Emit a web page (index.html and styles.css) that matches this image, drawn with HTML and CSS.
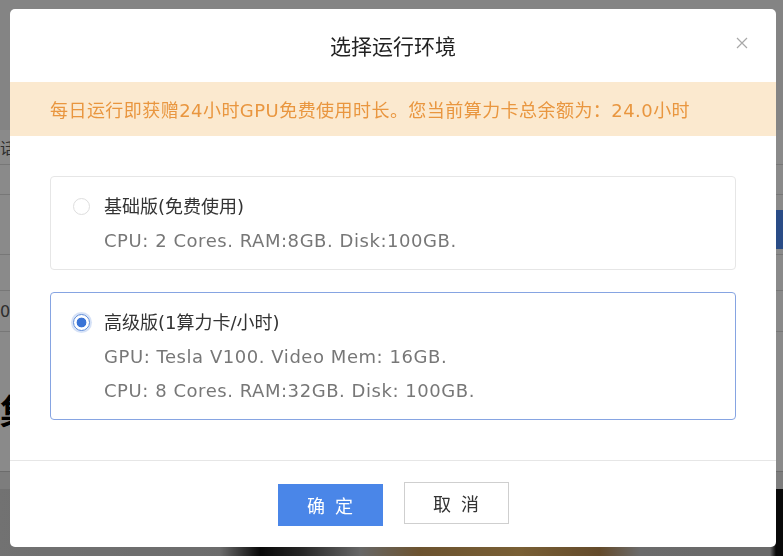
FILE: index.html
```html
<!DOCTYPE html>
<html lang="zh-CN">
<head>
<meta charset="utf-8">
<title>选择运行环境</title>
<link rel="stylesheet" href="styles.css">
</head>
<body>
<div class="page">
  <div class="pg-head"></div>
  <div class="pg-row pg-r1"><span class="pg-text">话题</span></div>
  <div class="pg-row pg-r2"></div>
  <div class="pg-row pg-r3"><span></span><span class="pg-btn"></span></div>
  <div class="pg-row pg-r4"></div>
  <div class="pg-row pg-r5"><span class="pg-text">06</span></div>
  <div class="pg-row pg-r6"><span class="pg-big">集</span></div>
  <div class="pg-strip"></div>
  <div class="pg-image"></div>
</div>
<div class="overlay"></div>
<div class="modal">
  <div class="modal-header">
    <span></span>
    <h2 class="modal-title">选择运行环境</h2>
    <button class="modal-close" aria-label="关闭">
      <svg width="12" height="12" viewBox="0 0 12 12"><path d="M1 1L11 11M11 1L1 11" stroke="#a8a8a8" stroke-width="1.2" fill="none"/></svg>
    </button>
  </div>
  <div class="banner">每日运行即获赠24小时GPU免费使用时长。您当前算力卡总余额为：24.0小时</div>
  <div class="modal-body">
    <label class="card">
      <span class="radio"></span>
      <div class="card-lines">
        <div class="card-title">基础版(免费使用)</div>
        <div class="card-spec">CPU: 2 Cores. RAM:8GB. Disk:100GB.</div>
      </div>
    </label>
    <label class="card card-active">
      <span class="radio radio-on"></span>
      <div class="card-lines">
        <div class="card-title">高级版(1算力卡/小时)</div>
        <div class="card-spec">GPU: Tesla V100. Video Mem: 16GB.</div>
        <div class="card-spec">CPU: 8 Cores. RAM:32GB. Disk: 100GB.</div>
      </div>
    </label>
  </div>
  <div class="modal-footer">
    <button class="btn btn-primary">确定</button>
    <button class="btn btn-default">取消</button>
  </div>
</div>
</body>
</html>
```

FILE: styles.css
```css
* { box-sizing: border-box; }
html, body { margin: 0; padding: 0; }
body {
  width: 783px;
  height: 556px;
  overflow: hidden;
  font-family: "DejaVu Sans", "Noto Sans CJK SC", sans-serif;
}

/* background page */
.page {
  height: 556px;
  display: flex;
  flex-direction: column;
  background: #ffffff;
}
.pg-head { height: 130px; background: #f4f4f4; }
.pg-row {
  display: flex;
  justify-content: space-between;
  align-items: center;
  border-bottom: 1px solid #dcdcdc;
  font-size: 16px;
  color: #555;
}
.pg-r1 { height: 35px; }
.pg-r2 { height: 30px; }
.pg-r3 { height: 60px; align-items: flex-end; }
.pg-r4 { height: 36px; }
.pg-r5 { height: 41px; }
.pg-r6 { height: 140px; border-bottom-color: #c8c8c8; }
.pg-text { margin-left: 0; }
.pg-btn {
  width: 8px;
  height: 39px;
  margin-bottom: 5px;
  background: #4f8cf7;
}
.pg-big {
  font-size: 34px;
  font-weight: 700;
  color: #000;
  margin-top: 16px;
}
.pg-strip { height: 17px; background: #e8e8e8; }
.pg-image {
  flex: 1;
  background: linear-gradient(90deg, #d2d2d2 0px, #c8c8c8 220px, #111 260px, #444 300px, #bdbdbd 360px, #c89a58 420px, #e0b062 520px, #b88a50 600px, #c6c6c6 640px, #c4c4c4 770px, #111 776px);
}

.overlay {
  position: fixed;
  inset: 0;
  background: rgba(0, 0, 0, 0.46);
}

/* modal */
.modal {
  position: fixed;
  top: 9px;
  left: 10px;
  width: 766px;
  height: 538px;
  background: #fff;
  border-radius: 5px;
  display: flex;
  flex-direction: column;
  overflow: hidden;
}
.modal-header {
  height: 73px;
  display: grid;
  grid-template-columns: 1fr auto 1fr;
  align-items: center;
}
.modal-title {
  margin: 0;
  font-family: "Noto Sans CJK SC", sans-serif;
  font-size: 21px;
  font-weight: 400;
  color: #222;
  padding-bottom: 1px;
}
.modal-close {
  justify-self: end;
  margin-right: 28px;
  margin-bottom: 6px;
  border: 0;
  background: none;
  padding: 0;
  width: 12px;
  height: 12px;
  display: flex;
}
.banner {
  height: 54px;
  display: flex;
  align-items: center;
  padding-left: 40px;
  background: #fbe9cf;
  color: #e9963f;
  font-size: 18px;
  letter-spacing: 0.45px;
}
.modal-body {
  padding: 40px 40px 40px;
  display: flex;
  flex-direction: column;
  gap: 22px;
  border-bottom: 1px solid #e6e6e6;
}
.card {
  display: grid;
  grid-template-columns: 16px 1fr;
  column-gap: 15px;
  align-items: start;
  padding: 13px 20px 11px 22px;
  border: 1px solid #e6e6e6;
  border-radius: 4px;
}
.card-active { border-color: #86a4e2; }
.radio {
  width: 17px;
  height: 17px;
  margin-top: 8px;
  border: 1px solid #dedede;
  border-radius: 50%;
  background: #fff;
}
.radio-on {
  border: 1.5px solid #5c8ad8;
  background: radial-gradient(circle, #3a74d6 0 4.6px, #fff 5.2px);
  box-shadow: 0 0 0 2px rgba(120, 160, 230, 0.3);
}
.card-lines { display: flex; flex-direction: column; }
.card-title {
  line-height: 34px;
  font-size: 18px;
  color: #333;
}
.card-spec {
  line-height: 34px;
  font-size: 18px;
  letter-spacing: 0.55px;
  color: #777;
}
.modal-footer {
  flex: 1;
  display: flex;
  justify-content: center;
  align-items: center;
  gap: 21px;
  padding-top: 2px;
}
.btn {
  width: 105px;
  height: 42px;
  font-family: "Noto Sans CJK SC", sans-serif;
  font-size: 18px;
  letter-spacing: 10px;
  padding: 0 0 0 10px;
  cursor: pointer;
}
.btn-primary {
  background: #4a86e8;
  color: #fff;
  border: 0;
}
.btn-default {
  background: #fff;
  color: #333;
  border: 1px solid #cfcfcf;
  margin-bottom: 4px;
}
```
